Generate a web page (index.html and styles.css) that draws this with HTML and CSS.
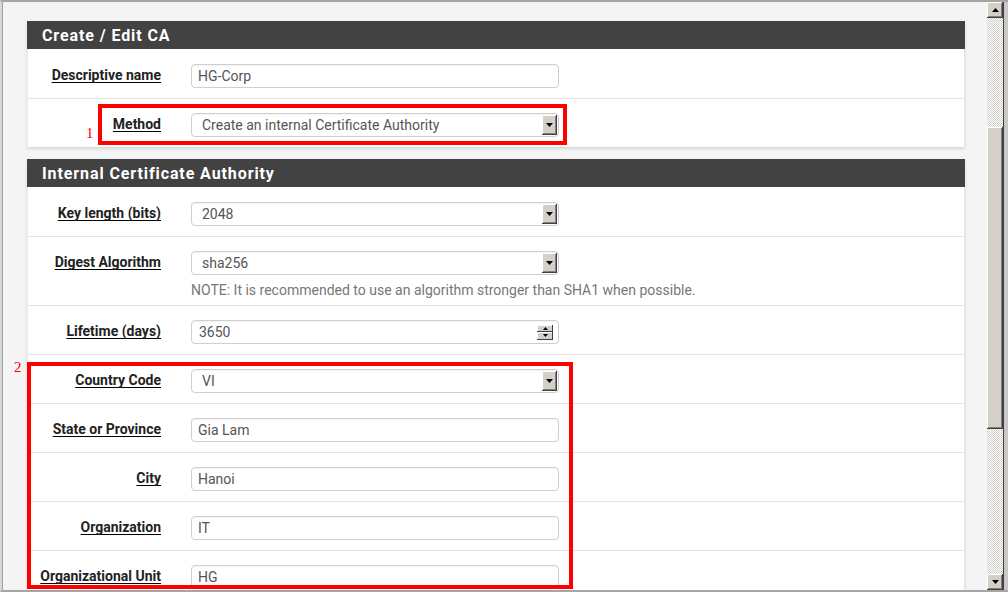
FILE: index.html
```html
<!DOCTYPE html>
<html>
<head>
<meta charset="utf-8">
<title>Create / Edit CA</title>
<link rel="stylesheet" href="styles.css">
</head>
<body>
<div class="window">
  <div class="viewport">
    <section class="panel">
      <h2 class="panel-heading">Create / Edit CA</h2>
      <div class="panel-body">
        <div class="form-row">
          <div class="label"><span>Descriptive name</span></div>
          <div class="field"><div class="input">HG-Corp</div></div>
        </div>
        <div class="form-row">
          <div class="label"><span>Method</span></div>
          <div class="field">
            <div class="select"><span class="select-text">Create an internal Certificate Authority</span><span class="drop-btn"><svg width="7" height="4" viewBox="0 0 7 4"><polygon points="0,0 7,0 3.5,4" fill="#000"/></svg></span></div>
          </div>
        </div>
      </div>
    </section>

    <section class="panel">
      <h2 class="panel-heading">Internal Certificate Authority</h2>
      <div class="panel-body">
        <div class="form-row">
          <div class="label"><span>Key length (bits)</span></div>
          <div class="field">
            <div class="select"><span class="select-text">2048</span><span class="drop-btn"><svg width="7" height="4" viewBox="0 0 7 4"><polygon points="0,0 7,0 3.5,4" fill="#000"/></svg></span></div>
          </div>
        </div>
        <div class="form-row form-row-note">
          <div class="label"><span>Digest Algorithm</span></div>
          <div class="field">
            <div class="select"><span class="select-text">sha256</span><span class="drop-btn"><svg width="7" height="4" viewBox="0 0 7 4"><polygon points="0,0 7,0 3.5,4" fill="#000"/></svg></span></div>
            <p class="note">NOTE: It is recommended to use an algorithm stronger than SHA1 when possible.</p>
          </div>
        </div>
        <div class="form-row">
          <div class="label"><span>Lifetime (days)</span></div>
          <div class="field">
            <div class="input number"><span class="select-text">3650</span>
              <span class="spinner">
                <span class="spin-btn"><svg width="5" height="3" viewBox="0 0 5 3"><polygon points="2.5,0 5,3 0,3" fill="#000"/></svg></span>
                <span class="spin-btn"><svg width="5" height="3" viewBox="0 0 5 3"><polygon points="0,0 5,0 2.5,3" fill="#000"/></svg></span>
              </span>
            </div>
          </div>
        </div>
        <div class="form-row">
          <div class="label"><span>Country Code</span></div>
          <div class="field">
            <div class="select"><span class="select-text">VI</span><span class="drop-btn"><svg width="7" height="4" viewBox="0 0 7 4"><polygon points="0,0 7,0 3.5,4" fill="#000"/></svg></span></div>
          </div>
        </div>
        <div class="form-row">
          <div class="label"><span>State or Province</span></div>
          <div class="field"><div class="input">Gia Lam</div></div>
        </div>
        <div class="form-row">
          <div class="label"><span>City</span></div>
          <div class="field"><div class="input">Hanoi</div></div>
        </div>
        <div class="form-row">
          <div class="label"><span>Organization</span></div>
          <div class="field"><div class="input">IT</div></div>
        </div>
        <div class="form-row">
          <div class="label"><span>Organizational Unit</span></div>
          <div class="field"><div class="input">HG</div></div>
        </div>
      </div>
    </section>
  </div>

  <div class="scrollbar">
    <div class="sb-btn"><svg width="7" height="4" viewBox="0 0 7 4"><polygon points="3.5,0 7,4 0,4" fill="#000"/></svg></div>
    <div class="sb-track"><div class="sb-thumb"></div></div>
    <div class="sb-btn"><svg width="7" height="4" viewBox="0 0 7 4"><polygon points="0,0 7,0 3.5,4" fill="#000"/></svg></div>
  </div>
  <div class="edge"></div>
</div>

<div class="mark mark-1"></div>
<span class="mark-num num-1">1</span>
<div class="mark mark-2"></div>
<span class="mark-num num-2">2</span>
</body>
</html>
```

FILE: styles.css
```css
* { box-sizing: border-box; }
html, body { margin: 0; padding: 0; }
body {
  width: 1008px;
  height: 592px;
  overflow: hidden;
  position: relative;
  background: #f4f4f4;
  font-family: Roboto, "Liberation Sans", sans-serif;
}
.window {
  display: flex;
  height: 592px;
  border-top: 2px solid #a6a6a6;
  border-bottom: 2px solid #a6a6a6;
  border-left: 2px solid #d8d8d8;
  box-shadow: inset 1px 0 #a0a0a0;
}
.viewport {
  flex: 1;
  overflow: hidden;
  padding: 19px 22px 0 25px;
}
.panel {
  width: 938px;
  background: #fff;
  margin-bottom: 12px;
  box-shadow: 0 2px 3px rgba(0, 0, 0, 0.12);
  border-right: 1px solid #e4e4e4;
  border-left: 1px solid #ececec;
}
.panel-heading {
  margin: 0 -1px;
  height: 28px;
  background: #424242;
  color: #fff;
  font-size: 16px;
  font-weight: 700;
  letter-spacing: 0.9px;
  line-height: 29px;
  padding-left: 15px;
}
.form-row {
  display: grid;
  grid-template-columns: 148px 383px;
  border-top: 1px solid #e3e3e3;
  padding: 14px 0 10px;
}
.form-row:first-child { border-top-color: #fff; }
.label {
  text-align: right;
  padding-right: 15px;
  font-size: 14px;
  font-weight: 700;
  line-height: 22px;
  color: #222;
  white-space: nowrap;
}
.label span {
  text-decoration: underline;
  text-decoration-color: #000;
  text-decoration-skip-ink: none;
  text-underline-offset: 2px;
}
.field { padding-left: 15px; }
.input, .select {
  width: 368px;
  height: 24px;
  border: 1px solid #cfcfcf;
  border-radius: 4px;
  background: #fff;
  box-shadow: inset 0 1px 1px rgba(0, 0, 0, 0.05);
  font-size: 14px;
  line-height: 22px;
  color: #555;
  padding: 0 6px;
}
.select, .number {
  display: flex;
  align-items: center;
  padding: 0 1px 0 10px;
}
.number { padding-left: 7px; padding-right: 5px; }
.select-text { flex: 1; }
.drop-btn {
  width: 15px;
  height: 20px;
  background: #d4d0c8;
  display: flex;
  align-items: center;
  justify-content: center;
  box-shadow: inset -1px -1px #404040, inset 1px 1px #fff, inset -2px -2px #808080;
}
.drop-btn svg, .sb-btn svg, .spin-btn svg { display: block; }
.spinner {
  display: flex;
  flex-direction: column;
  width: 16px;
  height: 15px;
}
.spin-btn {
  flex: 1;
  background: #d4d0c8;
  display: flex;
  align-items: center;
  justify-content: center;
  box-shadow: inset -1px -1px #404040, inset 1px 1px #fff;
}
.note {
  margin: 5px 0 -5px;
  font-size: 14px;
  line-height: 20px;
  color: #777;
  white-space: nowrap;
}
.scrollbar {
  width: 16px;
  display: flex;
  flex-direction: column;
}
.sb-btn {
  height: 16px;
  background: #d4d0c8;
  display: flex;
  align-items: center;
  justify-content: center;
  box-shadow: inset -1px -1px #404040, inset 1px 1px #fff, inset -2px -2px #808080;
}
.sb-track {
  flex: 1;
  background-color: #fff;
  background-image: conic-gradient(#d4d0c8 25%, #fff 0 50%, #d4d0c8 0 75%, #fff 0);
  background-size: 2px 2px;
}
.sb-thumb {
  margin-top: 109px;
  height: 302px;
  background: #d4d0c8;
  box-shadow: inset -1px -1px #404040, inset 1px 1px #fff, inset -2px -2px #808080;
}
.edge {
  width: 5px;
  background: #c8c8c8;
  border-left: 1px solid #404040;
}
.mark {
  position: absolute;
  border: 4px solid #ff0000;
}
.mark-1 { left: 98px; top: 104px; width: 469px; height: 41px; }
.mark-2 { left: 27px; top: 362px; width: 546px; height: 227px; }
.mark-num {
  position: absolute;
  font-family: "Liberation Serif", serif;
  font-size: 15px;
  line-height: 15px;
  color: #ff0000;
}
.num-1 { left: 86px; top: 126px; }
.num-2 { left: 14px; top: 360px; }
```
